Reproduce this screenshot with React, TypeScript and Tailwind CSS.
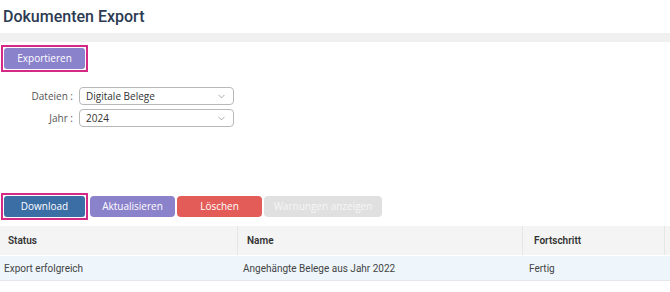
import { ChevronDown } from 'lucide-react';

const selects = [
  { label: 'Dateien :', value: 'Digitale Belege' },
  { label: 'Jahr :', value: '2024' },
];

const actions = [
  { label: 'Aktualisieren', className: 'w-[85px] bg-[#8b82cc] text-white' },
  { label: 'Löschen', className: 'w-[85px] bg-[#e35c58] text-white' },
  { label: 'Warnungen anzeigen', className: 'w-[118px] bg-[#e0e0e0] text-[#f6f6f6]' },
];

export default function App() {
  return (
    <div className="h-[292px] w-[670px] overflow-hidden bg-white font-['Open_Sans',sans-serif]">
      {/* Title */}
      <div className="flex h-[33px] items-center px-[3px]">
        <h1 className="font-['Roboto',sans-serif] text-[16px] font-medium leading-none text-[#2c3b52]">
          Dokumenten Export
        </h1>
      </div>
      <div className="h-[9px] bg-[#f0f0f0]" />

      {/* Export */}
      <div className="ml-[1px] mt-[3px] w-[87px] border-2 border-[#d42a86] p-[1px]">
        <button className="flex h-[21px] w-full items-center justify-center rounded-[3px] bg-[#8b82cc] text-[10px] font-medium text-white">
          Exportieren
        </button>
      </div>

      {/* Filters */}
      <div className="mt-[15px] grid w-[234px] grid-cols-[73px_1fr] gap-x-[6px] gap-y-[4px]">
        {selects.map((s) => (
          <div key={s.label} className="contents">
            <span className="flex h-[18px] items-center justify-end text-[10px] text-[#555]">{s.label}</span>
            <div className="flex h-[18px] items-center justify-between rounded-[4px] border border-[#b8b8b8] pl-[6px] pr-[6px] text-[10px] text-[#333]">
              <span>{s.value}</span>
              <ChevronDown className="h-[11px] w-[11px] text-[#888]" strokeWidth={1.5} />
            </div>
          </div>
        ))}
      </div>

      {/* Actions */}
      <div className="mt-[66px] flex items-center gap-[2px]">
        <div className="ml-[1px] w-[87px] border-2 border-[#d42a86] p-[1px]">
          <button className="flex h-[21px] w-full items-center justify-center rounded-[3px] bg-[#3c6ea6] text-[10px] font-medium text-white">
            Download
          </button>
        </div>
        {actions.map((a) => (
          <button
            key={a.label}
            className={`flex h-[21px] items-center justify-center rounded-[4px] text-[10px] font-medium ${a.className}`}
          >
            {a.label}
          </button>
        ))}
      </div>

      {/* Table */}
      <div className="mt-[6px] font-['Roboto',sans-serif] text-[10px]">
        <div className="grid h-[29px] grid-cols-[238px_285px_142px_1fr] bg-[#f4f4f4] font-semibold text-[#333]">
          <div className="flex items-center border-r border-[#e6e6e6] pl-[8px]">Status</div>
          <div className="flex items-center border-r border-[#e6e6e6] pl-[9px]">Name</div>
          <div className="flex items-center border-r border-[#e6e6e6] pl-[11px]">Fortschritt</div>
          <div />
        </div>
        <div className="mt-[1px] grid h-[25px] grid-cols-[238px_285px_142px_1fr] border-b border-[#e4e8ec] bg-[#eef6fc] text-[#444]">
          <div className="flex items-center pl-[4px]">Export erfolgreich</div>
          <div className="flex items-center pl-[5px]">Angehängte Belege aus Jahr 2022</div>
          <div className="flex items-center pl-[6px]">Fertig</div>
          <div />
        </div>
      </div>
    </div>
  );
}
